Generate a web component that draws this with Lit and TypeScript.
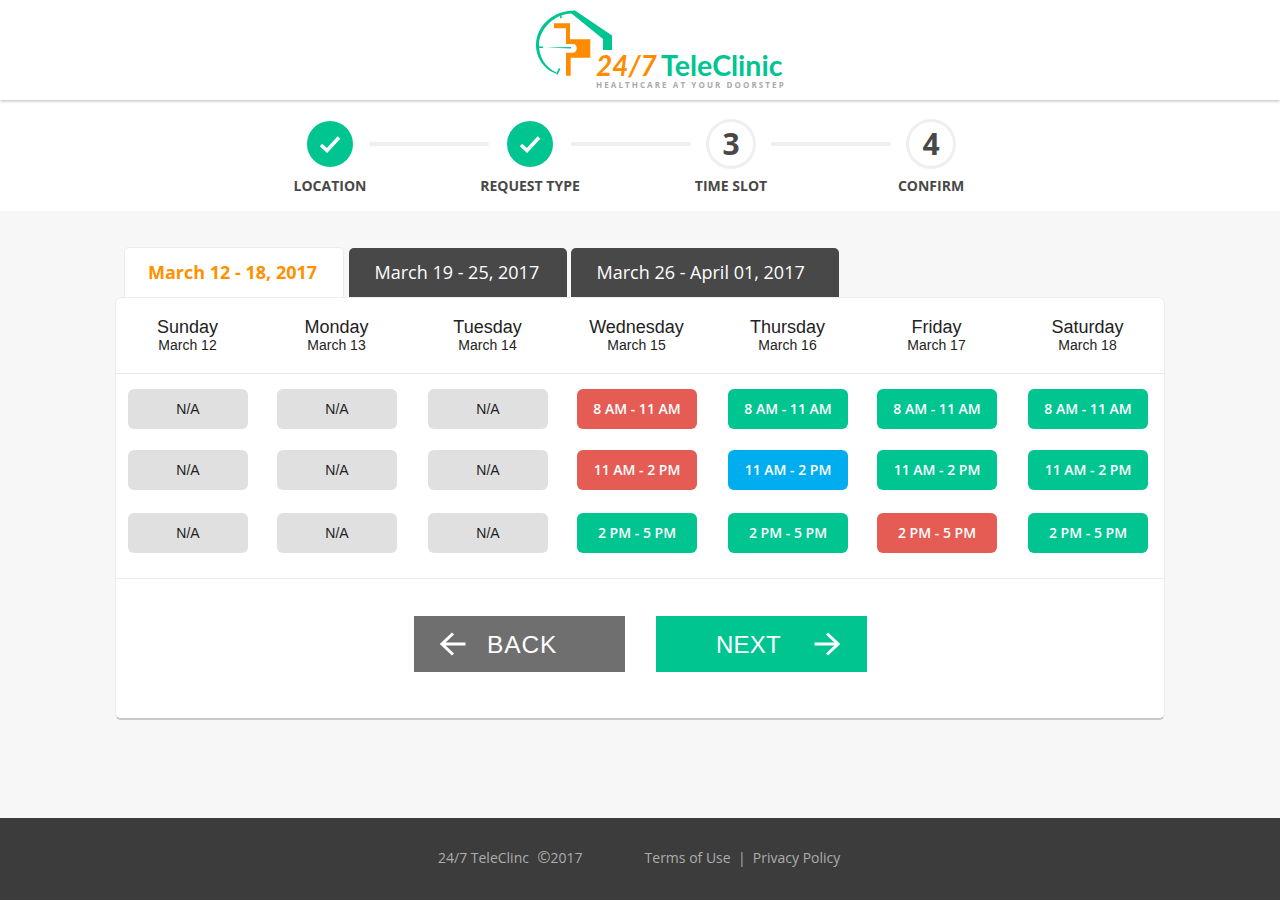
import { LitElement, html, css, svg } from 'lit';
import { customElement } from 'lit/decorators.js';

type SlotKind = 'na' | 'open' | 'taken' | 'picked';

interface Day {
  name: string;
  date: string;
  slots: SlotKind[];
}

const TIMES = ['8 AM - 11 AM', '11 AM - 2 PM', '2 PM - 5 PM'];

const DAYS: Day[] = [
  { name: 'Sunday', date: 'March 12', slots: ['na', 'na', 'na'] },
  { name: 'Monday', date: 'March 13', slots: ['na', 'na', 'na'] },
  { name: 'Tuesday', date: 'March 14', slots: ['na', 'na', 'na'] },
  { name: 'Wednesday', date: 'March 15', slots: ['taken', 'taken', 'open'] },
  { name: 'Thursday', date: 'March 16', slots: ['open', 'picked', 'open'] },
  { name: 'Friday', date: 'March 17', slots: ['open', 'open', 'taken'] },
  { name: 'Saturday', date: 'March 18', slots: ['open', 'open', 'open'] },
];

const logo = svg`
  <svg class="logo" width="260" height="100" viewBox="530 0 260 100">
    <path fill="#00c591" d="M575 10.500C555 10 537 24 536 44C535.500 58 545 70 556 73.500L556.500 72.500C546 68 538.500 57 539 44C540 27 556 14 571.500 13.500L603 39V50H612V35.500Z"/>
    <path fill="#00c591" d="M559.500 15l1.500-.5 1 3.500-1.500.5zM537 46.500h6v1.500h-6zM556 74l3-6 1.500.7-3 6z"/>
    <path fill="#00c591" d="M546 47.500L571 47V48.500Z"/>
    <path fill="#ff8c00" d="M554 23.300H570V39.300H590.300V57.700H570.700V75.700H566V52.700H573C578 52.700 578 44 573 44H566V28.300H554Z"/>
    <text class="t247" x="596" y="76">24/7</text>
    <text class="tname" x="661" y="76">TeleClinic</text>
    <text class="ttag" x="596" y="88">HEALTHCARE AT YOUR DOORSTEP</text>
  </svg>
`;

const check = html`
  <svg width="22" height="18" viewBox="0 0 22 18">
    <path d="M2 10l6 5.500L20 2.500" fill="none" stroke="#fff" stroke-width="3.600"/>
  </svg>
`;

@customElement('app-root')
export class AppRoot extends LitElement {
  static styles = css`
    :host {
      display: block;
      min-height: 900px;
      background: #f7f7f7;
      font-family: 'Open Sans', sans-serif;
      color: #484848;
    }

    .top {
      height: 100px;
      box-sizing: border-box;
      padding-left: 530px;
      background: #fff;
      display: flex;
      box-shadow: 0 1px 3px rgba(0, 0, 0, 0.28);
      position: relative;
    }

    .logo {
      display: block;
    }
    .logo text {
      font-family: Lato, sans-serif;
    }
    .logo .t247 {
      font-size: 28px;
      font-weight: 700;
      font-style: italic;
      fill: #ff8c00;
    }
    .logo .tname {
      font-size: 28.5px;
      font-weight: 700;
      fill: #00c591;
    }
    .logo .ttag {
      font-family: 'Open Sans', sans-serif;
      font-size: 8px;
      font-weight: 700;
      letter-spacing: 2.09px;
      fill: #a9a9a9;
    }

    .steps {
      height: 111px;
      box-sizing: border-box;
      background: #fff;
      display: flex;
      justify-content: flex-start;
      align-items: flex-start;
      padding: 19px 0 0 292px;
    }
    .step {
      width: 76px;
      display: flex;
      flex-direction: column;
      align-items: center;
      flex: none;
    }
    .circle {
      width: 50px;
      height: 50px;
      box-sizing: border-box;
      border-radius: 50%;
      display: flex;
      align-items: center;
      justify-content: center;
      font-size: 30px;
      font-weight: 700;
      line-height: 1;
      border: 3px solid #efefef;
      background: #fff;
      color: #484848;
    }
    .circle.done {
      background: #00c591;
      border: 2px solid #fff;
    }
    .label {
      margin-top: 7px;
      font-size: 14px;
      line-height: 19px;
      font-weight: 700;
      white-space: nowrap;
      color: #484848;
    }
    .line {
      width: 120px;
      height: 4px;
      flex: none;
      margin: 23px 2px 0;
      border-radius: 2px;
      background: #efefef;
    }
    .line:nth-child(2) {
      margin-left: 1px;
      margin-right: 3px;
    }
    .line:nth-child(4) {
      margin-left: 3px;
    }

    main {
      width: 1050px;
      height: 607px;
      box-sizing: border-box;
      margin-left: 115px;
      padding-top: 36px;
    }

    .tabs {
      display: flex;
      align-items: flex-end;
      height: 51px;
      margin-left: 9px;
      position: relative;
      z-index: 1;
    }
    .tab {
      height: 50px;
      box-sizing: border-box;
      border-radius: 5px 5px 0 0;
      background: #484848;
      color: #fff;
      font-size: 18px;
      line-height: 48px;
      padding-left: 25.5px;
      white-space: nowrap;
    }
    .tab.active {
      width: 220px;
      height: 51px;
      margin-right: 5px;
      padding-left: 23px;
      background: #fff;
      color: #ff9000;
      font-weight: 700;
      line-height: 48px;
      border: 1px solid #ececec;
      border-bottom: none;
    }
    .tab.second {
      width: 218px;
      margin-right: 4px;
    }
    .tab.third {
      width: 268px;
    }

    .card {
      height: 423px;
      box-sizing: border-box;
      margin-top: -1px;
      background: #fff;
      border: 1px solid #ececec;
      border-bottom: 2px solid #c8c8c8;
      border-radius: 6px;
      position: relative;
      z-index: 2;
    }

    .days,
    .slots {
      display: grid;
      grid-template-columns: 149px 151px 149px 151px 149px 151px 120px;
    }
    .days {
      height: 76px;
      box-sizing: border-box;
      padding: 19px 0 0 11.5px;
      border-bottom: 1px solid #e8e8e8;
      font-family: 'Liberation Sans', Arial, sans-serif;
      color: #222;
    }
    .day {
      width: 120px;
      text-align: center;
    }
    .day b {
      display: block;
      font-weight: 400;
      font-size: 18px;
      line-height: 20px;
    }
    .day span {
      display: block;
      font-size: 14px;
      line-height: 17px;
    }

    .slots {
      row-gap: 21px;
      height: 205px;
      box-sizing: border-box;
      padding: 15px 0 0 12px;
      grid-template-rows: 40px 40px 40px;
      border-bottom: 1px solid #ececec;
    }
    .slots .slot:nth-child(n + 15) {
      margin-top: 2px;
    }
    .slot {
      width: 120px;
      height: 40px;
      box-sizing: border-box;
      padding-bottom: 2px;
      border-radius: 6px;
      display: flex;
      align-items: center;
      justify-content: center;
      font-size: 14px;
      font-weight: 600;
      color: #fff;
    }
    .slot.na {
      padding-bottom: 0;
      background: #e0e0e0;
      color: #222;
      font-family: 'Liberation Sans', Arial, sans-serif;
      font-weight: 400;
    }
    .slot.open {
      background: #00c591;
    }
    .slot.taken {
      background: #e55c55;
    }
    .slot.picked {
      background: #00aeef;
    }

    .actions {
      display: flex;
      gap: 31px;
      padding: 37px 0 0 298px;
    }
    .action {
      width: 211px;
      height: 56px;
      box-sizing: border-box;
      display: flex;
      align-items: center;
      padding-top: 2px;
      color: #fff;
      font-family: 'Liberation Sans', Arial, sans-serif;
      font-size: 24px;
    }
    .action svg {
      margin-top: -2px;
    }
    .action.back {
      background: #6f6f6f;
      padding-left: 26px;
      gap: 21px;
      font-size: 24.5px;
      letter-spacing: 0.9px;
    }
    .action.next {
      background: #00c591;
      padding-left: 60px;
      gap: 33px;
      letter-spacing: 0.2px;
    }

    footer {
      height: 82px;
      background: #3c3c3c;
      color: #adadad;
      font-size: 14px;
      display: flex;
      align-items: center;
      padding: 0 0 3px 438px;
      box-sizing: border-box;
      white-space: pre;
    }
    footer .mark {
      font-size: 16px;
      line-height: 14px;
      margin-left: 1px;
    }
    footer .links {
      margin-left: 62px;
    }
  `;

  render() {
    const cells: { kind: SlotKind; text: string }[] = [];
    TIMES.forEach((time, row) => {
      DAYS.forEach((day) => {
        const kind = day.slots[row];
        cells.push({ kind, text: kind === 'na' ? 'N/A' : time });
      });
    });

    return html`
      <header class="top">${logo}</header>

      <section class="steps">
        <div class="step">
          <div class="circle done">${check}</div>
          <div class="label">LOCATION</div>
        </div>
        <div class="line"></div>
        <div class="step">
          <div class="circle done">${check}</div>
          <div class="label">REQUEST TYPE</div>
        </div>
        <div class="line"></div>
        <div class="step">
          <div class="circle">3</div>
          <div class="label">TIME SLOT</div>
        </div>
        <div class="line"></div>
        <div class="step">
          <div class="circle">4</div>
          <div class="label">CONFIRM</div>
        </div>
      </section>

      <main>
        <div class="tabs">
          <div class="tab active">March 12 - 18, 2017</div>
          <div class="tab second">March 19 - 25, 2017</div>
          <div class="tab third">March 26 - April 01, 2017</div>
        </div>
        <div class="card">
          <div class="days">
            ${DAYS.map(
              (day) => html`<div class="day"><b>${day.name}</b><span>${day.date}</span></div>`
            )}
          </div>
          <div class="slots">
            ${cells.map((cell) => html`<div class="slot ${cell.kind}">${cell.text}</div>`)}
          </div>
          <div class="actions">
            <div class="action back">
              <svg width="26" height="24" viewBox="0 0 26 24">
                <path d="M25.500 12H2M13 1.500L2 12l11 10.500" fill="none" stroke="#fff" stroke-width="3"/>
              </svg>
              BACK
            </div>
            <div class="action next">
              NEXT
              <svg width="26" height="24" viewBox="0 0 26 24">
                <path d="M.5 12H24M13 1.500L24 12 13 22.500" fill="none" stroke="#fff" stroke-width="3"/>
              </svg>
            </div>
          </div>
        </div>
      </main>

      <footer>
        <span>24/7 TeleClinc  <span class="mark">©</span>2017</span>
        <span class="links">Terms of Use  |  Privacy Policy</span>
      </footer>
    `;
  }
}
